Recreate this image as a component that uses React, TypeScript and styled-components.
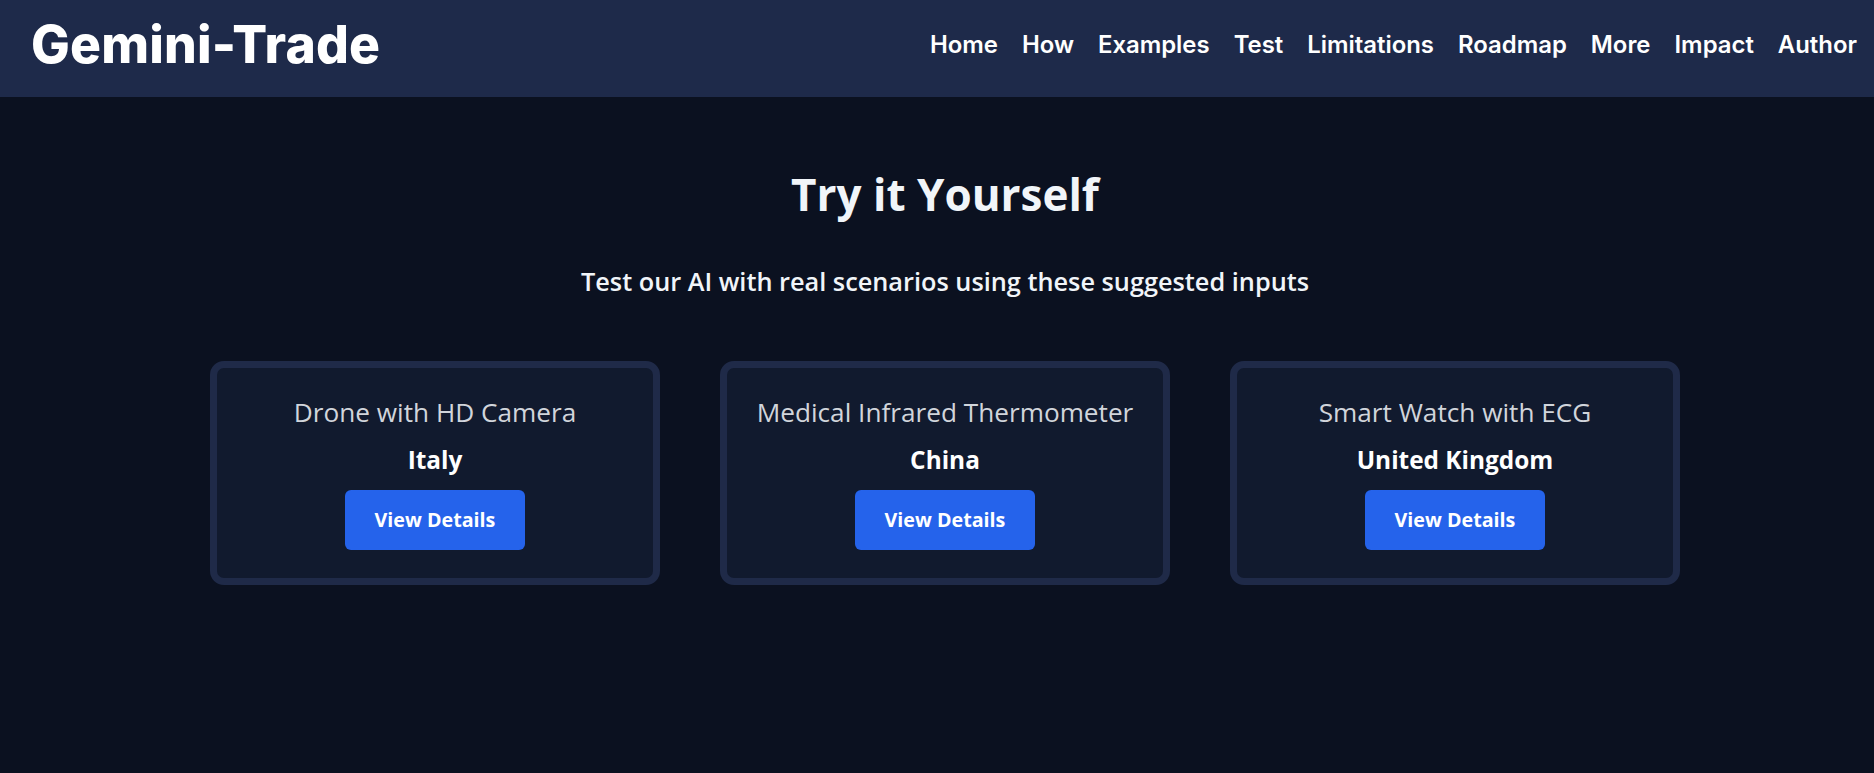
import React from "react";
import styled, { createGlobalStyle } from "styled-components";

const GlobalStyle = createGlobalStyle`
  html, body {
    margin: 0;
    padding: 0;
    background: #0b1120;
  }
  body {
    font-family: "Open Sans", "Noto Sans", sans-serif;
    color: #f1f5f9;
    min-height: 773px;
  }
  * { box-sizing: border-box; }
`;

const Header = styled.header`
  height: 97px;
  background: #1e2a4a;
  display: flex;
  align-items: center;
  justify-content: space-between;
  padding: 0 17px 8px 31px;
`;

const Logo = styled.div`
  font-family: "Inter", sans-serif;
  font-weight: 800;
  font-size: 51.6px;
  color: #ffffff;
  letter-spacing: 0.2px;
  line-height: 1;
`;

const Nav = styled.nav`
  display: flex;
  align-items: center;
  gap: 24px;
`;

const NavLink = styled.a`
  font-family: "Inter", sans-serif;
  font-weight: 600;
  font-size: 23.9px;
  color: #ffffff;
  text-decoration: none;
  line-height: 1;
`;

const Section = styled.main`
  display: flex;
  flex-direction: column;
  align-items: center;
  padding: 71px 0 0 16px;
`;

const Title = styled.h1`
  margin: 0;
  font-size: 44px;
  font-weight: 700;
  line-height: 1.2;
  color: #f1f5f9;
`;

const Subtitle = styled.p`
  margin: 42px 0 0;
  font-size: 25.3px;
  font-weight: 600;
  line-height: 1.5;
  color: #f1f5f9;
`;

const Grid = styled.div`
  display: grid;
  grid-template-columns: repeat(3, 450px);
  gap: 60px;
  margin-top: 60px;
`;

const Card = styled.div`
  background: #111a2e;
  border: 7px solid #1f2a48;
  border-radius: 14px;
  padding: 25px 20px 28px;
  display: flex;
  flex-direction: column;
  align-items: center;
  text-align: center;
`;

const CardTitle = styled.h3`
  margin: 0;
  font-size: 26.2px;
  font-weight: 400;
  line-height: 39px;
  color: #d1d5db;
`;

const Country = styled.p`
  margin: 12px 0 0;
  font-size: 24.4px;
  font-weight: 700;
  line-height: 32px;
  color: #ffffff;
`;

const Button = styled.button`
  margin-top: 14px;
  width: 180px;
  height: 60px;
  border: none;
  border-radius: 6px;
  background: #2563eb;
  color: #ffffff;
  font-family: "Open Sans", sans-serif;
  font-size: 19.7px;
  font-weight: 700;
  display: flex;
  align-items: center;
  justify-content: center;
  cursor: pointer;
`;

const links = ["Home", "How", "Examples", "Test", "Limitations", "Roadmap", "More", "Impact", "Author"];

const examples = [
  { product: "Drone with HD Camera", country: "Italy" },
  { product: "Medical Infrared Thermometer", country: "China" },
  { product: "Smart Watch with ECG", country: "United Kingdom" },
];

export default function App() {
  return (
    <>
      <GlobalStyle />
      <Header>
        <Logo>Gemini-Trade</Logo>
        <Nav>
          {links.map((l) => (
            <NavLink key={l} href="#">
              {l}
            </NavLink>
          ))}
        </Nav>
      </Header>
      <Section>
        <Title>Try it Yourself</Title>
        <Subtitle>Test our AI with real scenarios using these suggested inputs</Subtitle>
        <Grid>
          {examples.map((e) => (
            <Card key={e.product}>
              <CardTitle>{e.product}</CardTitle>
              <Country>{e.country}</Country>
              <Button>View Details</Button>
            </Card>
          ))}
        </Grid>
      </Section>
    </>
  );
}
